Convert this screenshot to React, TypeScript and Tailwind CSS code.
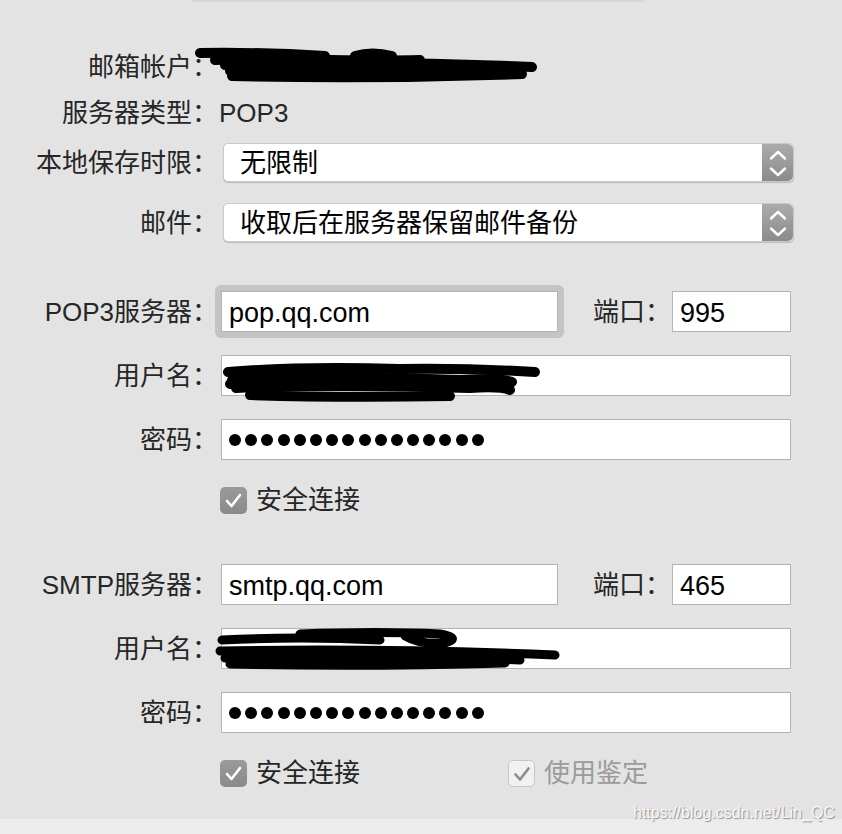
import React from "react";

const Label = ({ children }: { children: React.ReactNode }) => (
  <div className="w-[218px] shrink-0 text-right text-[#262626] leading-none">{children}</div>
);

const Stepper = () => (
  <div className="w-[31px] h-full shrink-0 rounded-r-[5px] bg-gradient-to-b from-[#ababab] to-[#8b8b8b]">
    <svg width="31" height="39" viewBox="0 0 31 39" fill="none" stroke="#ffffff" strokeWidth="2.4" strokeLinecap="round" strokeLinejoin="round">
      <path d="M9 14.5 L16 8 L23 14.5" />
      <path d="M9 24.5 L16 31 L23 24.5" />
    </svg>
  </div>
);

const Select = ({ value }: { value: string }) => (
  <div className="ml-[5px] w-[571px] h-[39px] flex items-stretch bg-white rounded-[5px] border border-[#c9c9c9] shadow-[0_1px_1px_rgba(0,0,0,0.18)]">
    <div className="flex-1 flex items-center pl-[16px] text-black leading-none">{value}</div>
    <Stepper />
  </div>
);

const Field = ({ children, className = "" }: { children?: React.ReactNode; className?: string }) => (
  <div className={`h-[41px] bg-white border border-[#b4b4b4] flex items-center pl-[7px] pt-[4px] text-[27px] text-black leading-none ${className}`}>
    {children}
  </div>
);

const Dots = () => (
  <div className="flex items-center gap-[4.2px] -mt-[3px]">
    {Array.from({ length: 16 }).map((_, i) => (
      <span key={i} className="w-[12px] h-[12px] rounded-full bg-black" />
    ))}
  </div>
);

const Check = ({ disabled = false }: { disabled?: boolean }) => (
  <div
    className={`w-[27px] h-[27px] rounded-[5px] shrink-0 ${
      disabled ? "bg-[#f1f1f1] border border-[#c6c6c6]" : "bg-gradient-to-b from-[#9a9a9a] to-[#8a8a8a]"
    }`}
  >
    <svg width="27" height="27" viewBox="0 0 27 27" fill="none" stroke={disabled ? "#8c8c8c" : "#ffffff"} strokeWidth="2.6" strokeLinecap="round" strokeLinejoin="round">
      <path d={disabled ? "M6.5 13.5 L11 18.5 L19.5 7.5" : "M7 14 L11.5 19 L20 8"} />
    </svg>
  </div>
);

const ServerBlock = ({ label, host, port, focused, extra }: { label: string; host: string; port: string; focused?: boolean; extra?: React.ReactNode }) => (
  <>
    <div className="flex items-center h-[41px]">
      <Label>{label}</Label>
      <div className="ml-[3px] w-[337px]">
        {focused ? (
          <div className="-m-[6px] p-[6px] rounded-[6px] bg-[#c4c4c4]">
            <Field>{host}</Field>
          </div>
        ) : (
          <Field>{host}</Field>
        )}
      </div>
      <div className="ml-[35px] w-[78px] text-[#262626] leading-none">端口：</div>
      <Field className="ml-[1px] w-[119px]">{port}</Field>
    </div>
    <div className="flex items-center h-[41px] mt-[23px]">
      <Label>用户名：</Label>
      <Field className="ml-[3px] w-[570px]" />
    </div>
    <div className="flex items-center h-[41px] mt-[23px]">
      <Label>密码：</Label>
      <Field className="ml-[3px] w-[570px]">
        <Dots />
      </Field>
    </div>
    <div className="flex items-center h-[40px] mt-[20px]">
      <div className="w-[220px] shrink-0" />
      <Check />
      <span className="ml-[9px] text-[#262626] leading-none">安全连接</span>
      {extra}
    </div>
  </>
);

export default function App() {
  return (
    <div className="relative w-[842px] h-[834px] overflow-hidden bg-[#e3e3e3] flex flex-col text-[26px] font-['Liberation_Sans','Noto_Sans_CJK_SC',sans-serif]">
      <div className="ml-[192px] w-[452px] h-[2px] bg-[#d5d5d5]" />

      <div className="flex-1 flex flex-col">
        <div className="flex items-center h-[40px] mt-[45px]">
          <Label>邮箱帐户：</Label>
        </div>
        <div className="flex items-center h-[40px] mt-[6px]">
          <Label>服务器类型：</Label>
          <span className="ml-[1px] text-[#262626] leading-none">POP3</span>
        </div>
        <div className="flex items-center h-[39px] mt-[10px]">
          <Label>本地保存时限：</Label>
          <Select value="无限制" />
        </div>
        <div className="flex items-center h-[39px] mt-[21px]">
          <Label>邮件：</Label>
          <Select value="收取后在服务器保留邮件备份" />
        </div>

        <div className="mt-[49px]">
          <ServerBlock label="POP3服务器：" host="pop.qq.com" port="995" focused />
        </div>

        <div className="mt-[44px]">
          <ServerBlock
            label="SMTP服务器："
            host="smtp.qq.com"
            port="465"
            extra={
              <div className="ml-[148px] flex items-center">
                <Check disabled />
                <span className="ml-[9px] text-[#9b9b9b] leading-none">使用鉴定</span>
              </div>
            }
          />
        </div>
      </div>

      <div className="h-[15px] bg-[#ececec]" />

      {/* watermark */}
      <div className="absolute left-[633px] top-[805px] text-[16px] leading-none text-[#f7f7f7] font-['Liberation_Sans',sans-serif] [text-shadow:1px_1px_1px_#8f8f8f]">
        https://blog.csdn.net/Lin_QC
      </div>

      {/* redaction scribbles */}
      <svg className="absolute left-0 top-0 pointer-events-none" width="842" height="834" viewBox="0 0 842 834" fill="none" stroke="#000" strokeLinecap="round" strokeLinejoin="round">
        <g strokeWidth="10">
          <path d="M200 53 Q 260 52 325 56" />
          <path d="M215 60 C 280 57 330 62 420 60" />
          <path d="M355 56 Q 372 51 392 56" />
          <path d="M225 65 Q 380 60 532 67" />
          <path d="M230 71 Q 380 68 510 70" />
          <path d="M232 76 Q 380 79 522 74" />
          <path d="M240 68 Q 360 72 480 66" />
        </g>
        <g strokeWidth="10">
          <path d="M228 372 Q 300 366 400 369 Q 470 368 535 372" />
          <path d="M232 380 Q 330 375 460 380 Q 500 378 512 382" />
          <path d="M236 388 Q 340 384 470 388 Q 500 386 510 390" />
          <path d="M250 395 Q 340 398 450 396" />
          <path d="M230 384 Q 240 376 262 377" />
        </g>
        <g strokeWidth="9">
          <path d="M222 640 Q 300 636 380 640" />
          <path d="M300 634 Q 380 631 440 634 Q 462 638 445 643 Q 420 645 405 636" />
          <path d="M220 651 Q 380 648 555 655" />
          <path d="M225 658 Q 380 655 520 660" />
          <path d="M230 664 Q 360 667 505 663" />
        </g>
      </svg>
    </div>
  );
}
